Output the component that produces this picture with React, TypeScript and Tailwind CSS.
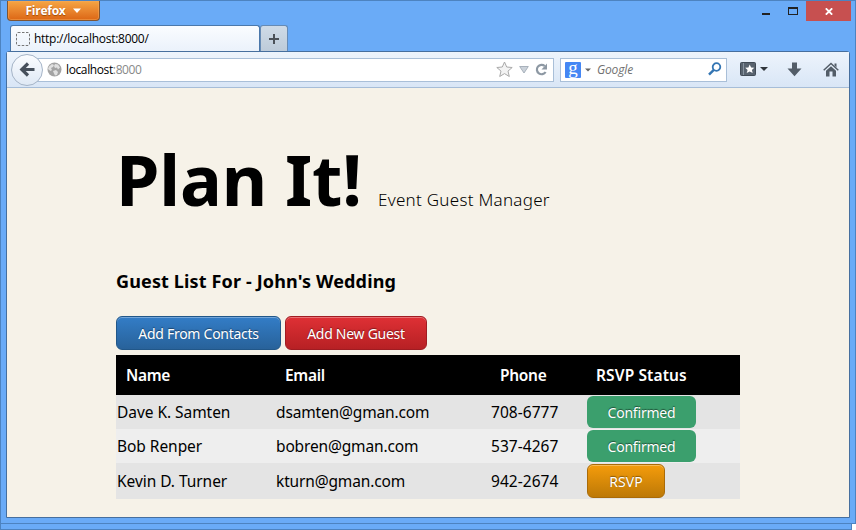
import React from "react";

const guests = [
  { name: "Dave K. Samten", email: "dsamten@gman.com", phone: "708-6777", confirmed: true },
  { name: "Bob Renper", email: "bobren@gman.com", phone: "537-4267", confirmed: true },
  { name: "Kevin D. Turner", email: "kturn@gman.com", phone: "942-2674", confirmed: false },
];

function TitleBar() {
  return (
    <div className="flex h-[24px] shrink-0 items-start pl-[6px]">
      <button className="flex h-[20px] w-[93px] items-center justify-center gap-[7px] rounded-b-[4px] border border-t-0 border-[#7d5434] bg-linear-to-b from-[#f5a544] to-[#dc6613] pr-px text-[12px] font-bold text-white shadow-[inset_0_0_0_1px_#f6a95a80] [text-shadow:0_1px_1px_#a04a00]">
        <span className="pt-px tracking-[-0.25px]">Firefox</span>
        <svg width="8" height="5" viewBox="0 0 8 5"><path d="M0 .5h8L4 5z" fill="#fff" /></svg>
      </button>
      <div className="flex-1" />
      <svg className="mr-[8px] h-[20px] w-[37px]" viewBox="0 0 37 20" shapeRendering="crispEdges">
        <path d="M1 12h8v2H1z" fill="#222" />
        <path d="M27 6h10v8H27zM28 8v5h8V8z" fill="#222" fillRule="evenodd" />
      </svg>
      <div className="mr-[4px] flex h-[20px] w-[45px] items-center justify-center bg-[#c75050]">
        <svg width="8" height="7" viewBox="0 0 8 7"><path d="M.8 .3l6.4 6.4M7.2 .3L.8 6.7" stroke="#fff" strokeWidth="1.8" /></svg>
      </div>
    </div>
  );
}

function Tabs() {
  return (
    <div className="flex h-[26px] shrink-0 items-end pl-[9px]">
      <div className="flex h-[26px] w-[250px] items-center rounded-t-[3px] border border-b-0 border-[#4b78ab] bg-linear-to-b from-[#fafcff] to-[#ebf2fb] pl-[5px] text-[12px] text-black">
        <svg width="14" height="14" viewBox="0 0 14 14"><rect x=".5" y=".5" width="13" height="13" rx="1.500" fill="none" stroke="#777" strokeDasharray="2.500 1.500" /></svg>
        <span className="ml-[4px] tracking-[-0.27px]">http://localhost:8000/</span>
      </div>
      <div className="flex h-[26px] w-[28px] items-center justify-center rounded-t-[3px] border border-b-0 border-[#668bb5] bg-linear-to-b from-[#cfdbe7] to-[#bdcbd9]">
        <svg width="10" height="10" viewBox="0 0 10 10"><path d="M0 5h10M5 0v10" stroke="#4b5158" strokeWidth="2" /></svg>
      </div>
    </div>
  );
}

function Toolbar() {
  return (
    <div className="flex h-[36px] shrink-0 items-center border-b border-[#a6bdd8] bg-linear-to-b from-[#edf4fc] to-[#d9e6f6]">
      <div className="z-10 ml-[4px] flex size-[32px] shrink-0 items-center justify-center rounded-full border border-[#a5b4c7] bg-linear-to-b from-[#fafcff] to-[#dfe9f5]">
        <svg width="16" height="16" viewBox="0 0 16 16"><path d="M9 1.500L2.800 7.500L9 13.500M3 7.500H15.500" fill="none" stroke="#46505c" strokeWidth="3.200" /></svg>
      </div>
      <div className="-ml-[6px] flex h-[24px] w-[517px] items-center border border-[#a9bfd8] bg-white pl-[9px] text-[12px]">
        <svg width="15" height="15" viewBox="0 0 15 15">
          <circle cx="7.5" cy="7.5" r="7" fill="#a3a3a3" />
          <path d="M2 4.500L5 2l2 1-1 2-2 1 1 2-1.500 1L1 7zM8 2l3 .5 2 3-2 2-1-2-2 .5-1-2zM6 9l3-1 2 2-1 3-2 .5-1-2z" fill="#e0e0e0" />
        </svg>
        <span className="ml-[4px] tracking-[-0.38px] text-black">localhost<span className="text-[#888]">:8000</span></span>
        <div className="ml-auto flex items-center pr-[5px]">
          <svg width="17" height="17" viewBox="0 0 17 17"><path d="M8.500 1l2.200 5 5.500.5-4.200 3.600 1.300 5.400-4.800-2.900-4.800 2.900L5 10.100.8 6.500 6.300 6z" fill="#f3f3f3" stroke="#a9a9a9" /></svg>
          <svg className="ml-[6px]" width="10" height="8" viewBox="0 0 10 8"><path d="M.7.500h8.600L5 7z" fill="#cbd2da" stroke="#a8b1bb" /></svg>
          <svg className="ml-[6px]" width="13" height="13" viewBox="0 0 13 13"><path d="M9.700 3A4.700 4.700 0 1 0 10.600 9" fill="none" stroke="#8d98a3" strokeWidth="2.200" /><path d="M12 .5v6H6.500z" fill="#8d98a3" /></svg>
        </div>
      </div>
      <div className="ml-[6px] flex h-[24px] w-[167px] items-center border border-[#a9bfd8] bg-white pl-[4px] text-[12px]">
        <span className="flex size-[16px] items-center justify-center rounded-[1px] bg-[#4587f4] pb-[5px] font-['Liberation_Serif',serif] text-[19px] leading-none text-white">g</span>
        <svg className="ml-[4px]" width="6" height="4" viewBox="0 0 6 4"><path d="M0 .5h6L3 3.500z" fill="#666" /></svg>
        <span className="ml-[6px] tracking-[-0.15px] text-[#707070] italic">Google</span>
        <svg className="mr-[4px] mb-[2px] ml-auto" width="14" height="14" viewBox="0 0 14 14"><circle cx="8.500" cy="5" r="3.800" fill="none" stroke="#3375b3" strokeWidth="1.800" /><path d="M5.800 7.800L1 12.700" stroke="#3375b3" strokeWidth="2.400" /></svg>
      </div>
      <svg className="mb-[2px] ml-[13px]" width="16" height="14" viewBox="0 0 16 14">
        <rect x=".5" y=".5" width="15" height="13" rx="1" fill="#58636f" stroke="#414b56" />
        <path d="M3.500 1v12" stroke="#8894a0" />
        <path d="M9.700 2.500l1.400 3 3.200.3-2.400 2.100.8 3.200-3-1.700-3 1.700.9-3.200-2.400-2.100 3.200-.3z" fill="#fff" />
      </svg>
      <svg className="mb-[2px] ml-[4px]" width="8" height="4" viewBox="0 0 8 4"><path d="M0 0h8L4 4z" fill="#30363c" /></svg>
      <svg className="ml-[19px]" width="15" height="15" viewBox="0 0 15 15"><path d="M5 .5h5v6h4.500l-7 7.800L.5 6.500H5z" fill="#535d68" /></svg>
      <svg className="ml-[21px]" width="16" height="15" viewBox="0 0 16 15">
        <path d="M.7 8.200L8 1.400l7.300 6.800" fill="none" stroke="#535d68" strokeWidth="1.500" />
        <path d="M11.500 1.500h2v4l-2-2zM3 8.800l5-4.600 5 4.600V14.500H9.500V9.500h-3v5H3z" fill="#535d68" />
      </svg>
    </div>
  );
}

function ActionButton({ label, tone }: { label: string; tone: string }) {
  return (
    <button className={"flex h-[34px] items-center justify-center rounded-[6px] border pt-px text-[14px] text-white shadow-[inset_0_1px_0_#ffffff50] [text-shadow:0_-1px_1px_#00000066] " + tone}>
      {label}
    </button>
  );
}

function Page() {
  return (
    <main className="flex-1 overflow-hidden bg-[#f6f2e8] pl-[109px] font-['Noto_Sans',sans-serif] text-black">
      <header className="flex h-[140px] items-baseline pt-[43px]">
        <h1 className="w-[262px] text-[70px] leading-[96px] font-bold tracking-[-0.2px] whitespace-nowrap">Plan It!</h1>
        <span className="text-[17px] font-light tracking-[0.28px] whitespace-nowrap">Event Guest Manager</span>
      </header>
      <h2 className="mt-[41px] h-[47px] text-[18px] leading-[25px] font-bold tracking-[0.14px]">Guest List For - John's Wedding</h2>
      <div className="flex gap-[4px]">
        <ActionButton label="Add From Contacts" tone="w-[165px] border-[#215789] bg-linear-to-b from-[#337dc7] to-[#28629a] tracking-[-0.27px]" />
        <ActionButton label="Add New Guest" tone="w-[142px] border-[#a01c22] bg-linear-to-b from-[#df3035] to-[#b72024] tracking-[-0.27px]" />
      </div>
      <div className="mt-[5px] w-[624px] text-[15.500px]">
        <div className="grid h-[40px] grid-cols-[159px_215px_96px_154px] items-center bg-black pt-[2px] font-semibold tracking-[-0.3px] text-white *:pl-[10px]">
          <span>Name</span>
          <span>Email</span>
          <span>Phone</span>
          <span className="tracking-[0.12px]">RSVP Status</span>
        </div>
        {guests.map((guest) => (
          <div key={guest.name} className="grid h-[34px] grid-cols-[159px_215px_96px_154px] items-center tracking-[-0.12px] *:pl-px last:h-[36px] even:bg-[#e4e4e4] odd:bg-[#eeeeee]">
            <span className="pt-[2px] tracking-[-0.05px]">{guest.name}</span>
            <span className="pt-[2px] tracking-[-0.15px]">{guest.email}</span>
            <span className="pt-[2px] tracking-[0.05px]">{guest.phone}</span>
            <div>
              {guest.confirmed ? (
                <span className="flex h-[32px] w-[109px] items-center justify-center rounded-[6px] bg-[#3b9f6d] text-[14px] tracking-[-0.2px] text-white [text-shadow:0_-1px_1px_#00000080]">Confirmed</span>
              ) : (
                <ActionButton label="RSVP" tone="w-[78px] border-[#aa6b08] bg-linear-to-b from-[#f59c0b] to-[#bd7907] tracking-[0px]" />
              )}
            </div>
          </div>
        ))}
      </div>
    </main>
  );
}

export default function App() {
  return (
    <div className="h-[530px] w-[856px] overflow-hidden bg-white font-['Open_Sans',sans-serif]">
      <div className="flex h-[524px] flex-col border border-[#4d83c0] bg-[#6aabf7]">
        <TitleBar />
        <Tabs />
        <div className="mx-[5px] mb-[5px] flex min-h-0 flex-1 flex-col rounded-t-[3px] border border-[#466f9e]">
          <Toolbar />
          <Page />
        </div>
      </div>
      <div className="h-[6px] w-[852px] border border-t-0 border-[#4d83c0] bg-[#6aabf7]" />
    </div>
  );
}
